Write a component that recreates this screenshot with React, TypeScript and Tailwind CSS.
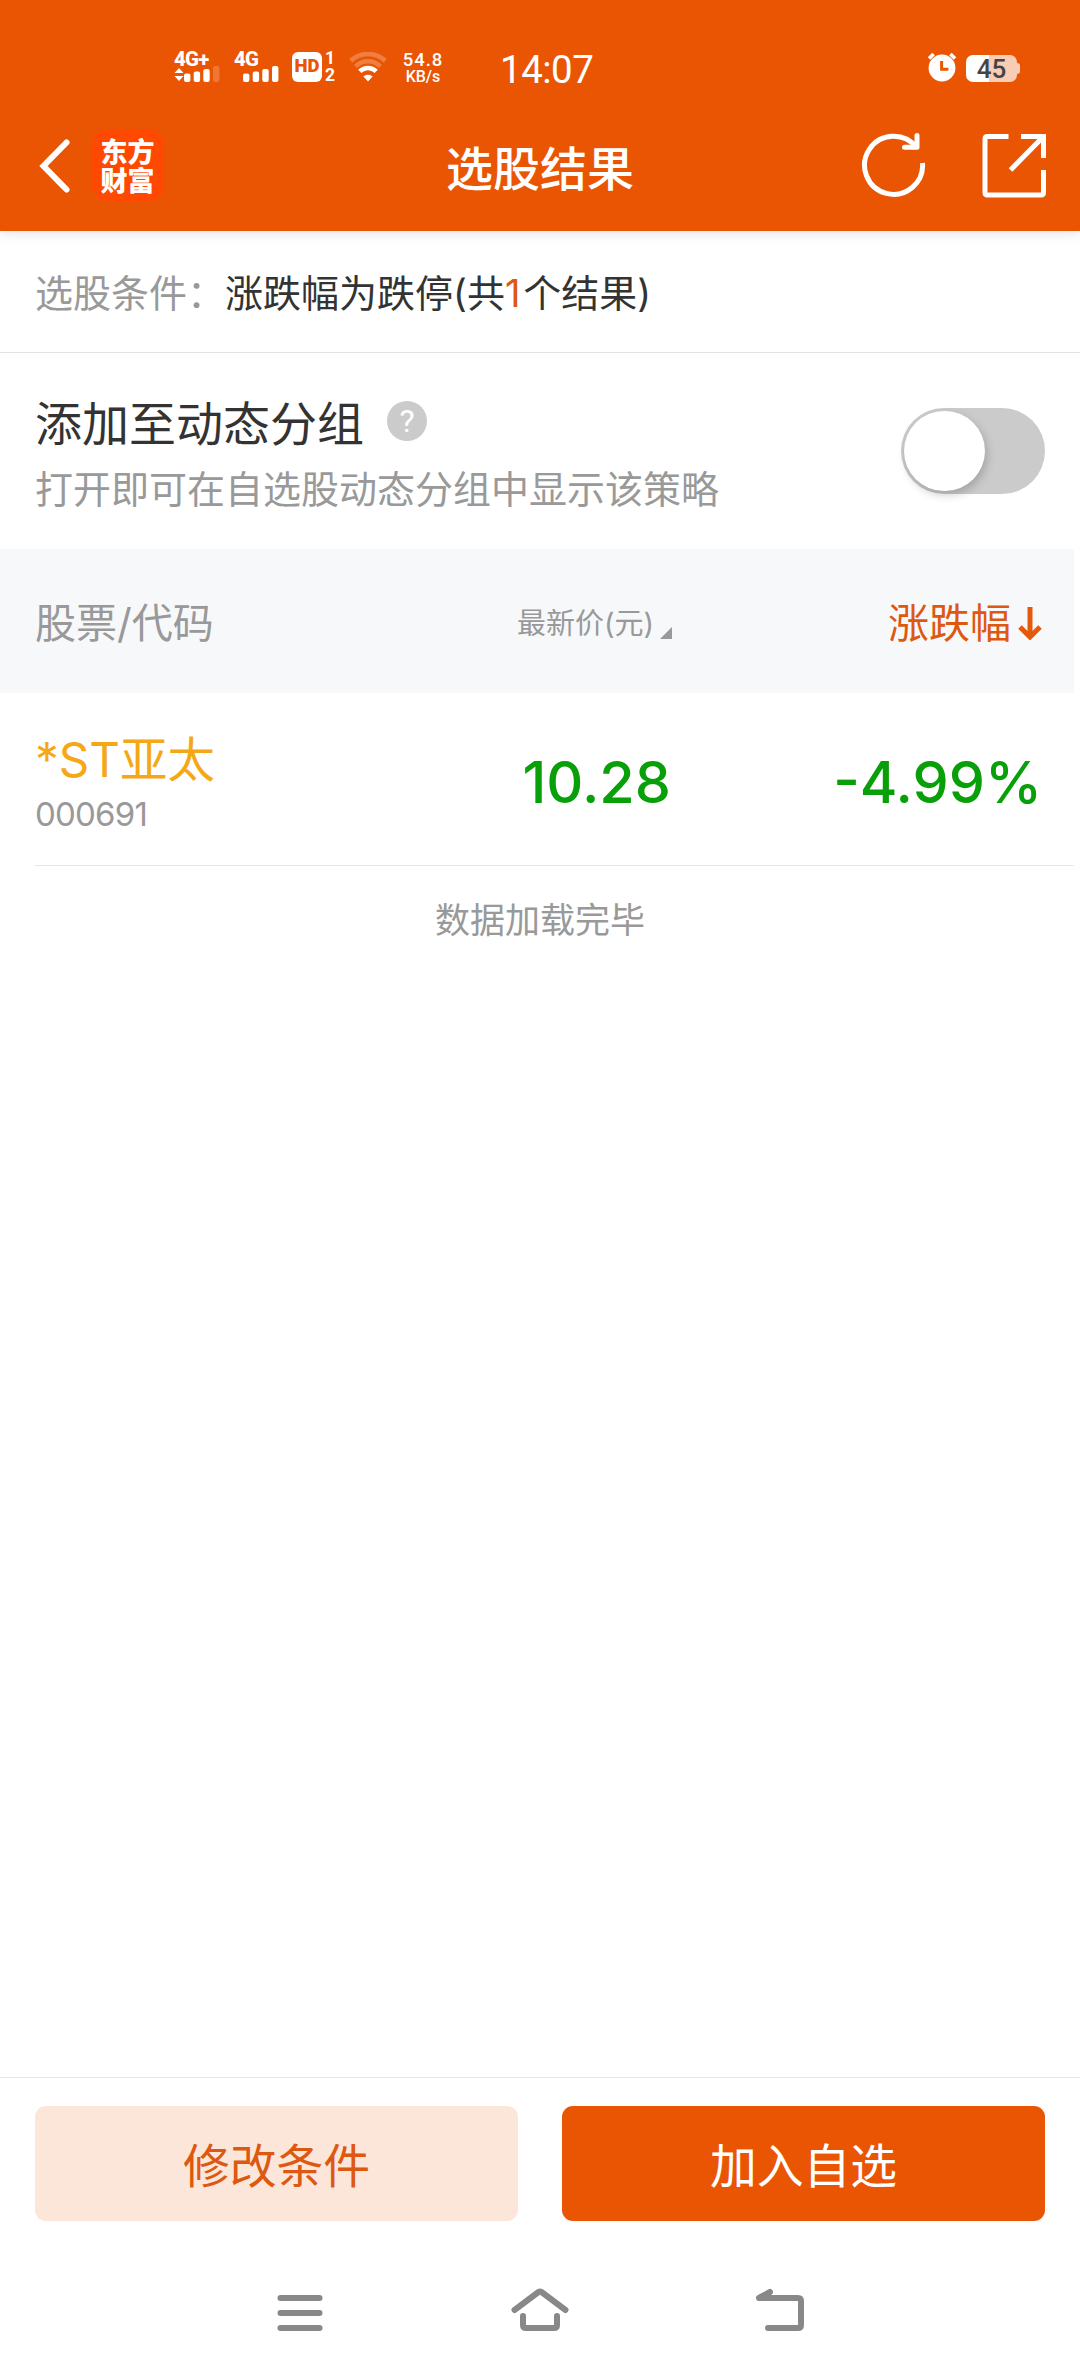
import type { ReactNode } from 'react'

type Stock = {
  name: string
  code: string
  price: string
  change: string
}

const stocks: Stock[] = [{ name: '*ST亚太', code: '000691', price: '10.28', change: '-4.99%' }]

function SignalBars({ dimLast = false }: { dimLast?: boolean }) {
  return (
    <svg width="36" height="16" viewBox="0 0 36 16" fill="#fff" className="block">
      <rect x="0" y="7.5" width="6.4" height="8.5" rx="2" />
      <rect x="9.7" y="5.5" width="6.4" height="10.5" rx="2" />
      <rect x="19.3" y="3" width="6.4" height="13" rx="2" />
      <rect x="29" y="0" width="6.4" height="16" rx="2" opacity={dimLast ? 0.2 : 1} />
    </svg>
  )
}

function WifiIcon() {
  return (
    <svg width="38" height="30" viewBox="0 0 38 30" fill="none" stroke="#fff" className="block">
      <g strokeWidth="4.6" opacity="0.24">
        <path d="M1.8 8.8C11.6 -0.4 26.4 -0.4 36.2 8.8" />
        <path d="M6.6 14.4C13.6 7.6 24.4 7.6 31.4 14.4" />
      </g>
      <path d="M10.8 19.4C15.6 14.8 22.4 14.8 27.2 19.4" strokeWidth="4.6" />
      <path d="M14.4 24.6C17 22 21 22 23.6 24.6L19 29.4Z" fill="#fff" stroke="none" />
    </svg>
  )
}

function AlarmIcon() {
  return (
    <svg width="30" height="30" viewBox="0 0 30 30" className="block">
      <circle cx="15" cy="16" r="13.4" fill="#fff" />
      <path d="M2 6.6L6.6 2M28 6.6L23.4 2" stroke="#fff" strokeWidth="3.6" />
      <path d="M14.6 9V17.2H21.4" fill="none" stroke="#ea5504" strokeWidth="3" />
    </svg>
  )
}

function StatusBar() {
  return (
    <div className="flex h-[96px] items-end font-[Roboto,sans-serif] text-white">
      <div className="ml-[174px] flex h-[48px] w-[46px] flex-col">
        <span className="h-[18px] text-[20.5px] leading-[23px] font-extrabold tracking-[-0.8px]">4G+</span>
        <div className="flex items-end">
          <svg width="10" height="15" viewBox="0 0 10 15" fill="#fff" className="block">
            <path d="M0.5 6L5 1L9.5 6ZM0.5 9L5 14L9.5 9Z" />
          </svg>
          <SignalBars dimLast />
        </div>
      </div>
      <div className="ml-[14px] flex h-[48px] w-[46px] flex-col">
        <span className="h-[18px] text-[20.5px] leading-[23px] font-extrabold tracking-[-0.8px]">4G</span>
        <div className="ml-[9px]">
          <SignalBars />
        </div>
      </div>
      <div className="mb-[14px] ml-[12px] flex h-[30px] w-[30px] items-center justify-center rounded-[6px] bg-white text-[18.5px] font-black text-[#ea5504]">
        HD
      </div>
      <div className="mb-[13px] ml-[2px] flex h-[33px] w-[12px] flex-col items-center text-[17.5px] leading-[16.5px] font-bold">
        <span>1</span>
        <span>2</span>
      </div>
      <div className="mb-[14px] ml-[13px]">
        <WifiIcon />
      </div>
      <div className="mb-[11px] ml-[9px] flex w-[54px] flex-col items-center font-medium">
        <span className="text-[18.5px] leading-[18px] tracking-[0.9px]">54.8</span>
        <span className="text-[16px] leading-[16px]">KB/s</span>
      </div>
      <div className="mb-[6px] ml-[50px] text-[38.5px] leading-[40px] tracking-[-0.5px]">14:07</div>
      <div className="mb-[14px] ml-auto">
        <AlarmIcon />
      </div>
      <div className="mr-[60px] mb-[14px] ml-[9px] flex items-center">
        <div className="flex h-[27px] w-[51px] items-center justify-center rounded-[7px] bg-[linear-gradient(to_right,#fff_45%,#f9ccb4_45%)] pt-[2px] text-[26px] font-medium text-[#444]">
          45
        </div>
        <div className="h-[11px] w-[3px] rounded-r-[3px] bg-[#f9ccb4]" />
      </div>
    </div>
  )
}

function NavHeader() {
  return (
    <div className="flex h-[135px] items-start text-white">
      <div className="flex w-[360px] items-start">
        <svg width="32" height="56" viewBox="0 0 32 56" className="mt-[42px] ml-[39px] block">
          <path d="M27.5 4.5L4.5 28L27.5 51.5" fill="none" stroke="#fff" strokeWidth="6" strokeLinecap="round" />
        </svg>
        <div className="mt-[33px] ml-[21px] flex h-[72px] w-[72px] items-center justify-center rounded-[15px] bg-[#ff4800]">
          <p className="w-[55px] font-['Noto_Sans_CJK_SC',sans-serif] text-[27px] leading-[29.5px] font-black break-all">东方财富</p>
        </div>
      </div>
      <h1 className="mt-[44px] flex-1 text-center text-[47px] leading-[58px] font-medium">选股结果</h1>
      <div className="flex w-[360px] justify-end pt-[36px] pr-[32px]">
        <svg width="68" height="68" viewBox="0 0 68 68" fill="none" stroke="#fff" strokeWidth="5" className="block">
          <path d="M62.5 31A29 29 0 1 1 56.5 15.5" />
          <path d="M57 3.5V15.3H44.5" strokeLinecap="round" strokeLinejoin="round" />
        </svg>
        <svg width="68" height="68" viewBox="0 0 68 68" fill="none" stroke="#fff" strokeWidth="5" className="ml-[52px] block">
          <path d="M28.5 4.5H7.5Q5 4.5 5 7V60.5Q5 63 7.5 63H61Q63.5 63 63.5 60.5V38" />
          <path d="M41 4.5H63.5V26M62.5 5.5L30.5 38" />
        </svg>
      </div>
    </div>
  )
}

function Toggle() {
  return (
    <div className="h-[86px] w-[144px] rounded-full bg-[#cbcbcb] p-[3px]">
      <div className="h-[80px] w-[81px] rounded-full bg-white shadow-[2px_4px_10px_rgba(0,0,0,0.2)]" />
    </div>
  )
}

function StockRow({ stock }: { stock: Stock }) {
  return (
    <div className="ml-[35px] flex h-[173px] w-[1039px] items-center border-b border-[#e8e8e8]">
      <div className="flex w-[400px] flex-col pt-[11px]">
        <span className="text-[47.5px] leading-[58px] text-[#f5a816]">{stock.name}</span>
        <span className="text-[33px] leading-[50px] tracking-[-0.8px] text-[#999]">{stock.code}</span>
      </div>
      <span className="w-[236px] pt-[5px] text-right text-[57.5px] leading-[70px] font-medium text-[#089f08]">{stock.price}</span>
      <span className="flex-1 pt-[5px] pr-[32px] text-right text-[57.5px] leading-[70px] font-medium text-[#089f08]">
        {stock.change}
      </span>
    </div>
  )
}

function ActionButton({ children, primary = false }: { children: ReactNode; primary?: boolean }) {
  return (
    <button
      className={`flex h-[115px] w-[483px] items-center justify-center rounded-[11px] pt-[6px] text-[46.8px] ${
        primary ? 'bg-[#ea5504] text-white' : 'bg-[#fce6da] text-[#dd5810]'
      }`}
    >
      {children}
    </button>
  )
}

export default function App() {
  return (
    <div className="flex h-[2376px] w-[1080px] flex-col bg-white font-[Inter,'Noto_Sans_CJK_SC',sans-serif] text-[#333]">
      <header className="z-10 h-[231px] shrink-0 bg-[#ea5504] shadow-[0_2px_12px_rgba(0,0,0,0.12)]">
        <StatusBar />
        <NavHeader />
      </header>

      {/* 选股条件 */}
      <div className="flex h-[122px] items-center border-b border-[#e2e2e2] pt-[4px] pl-[35px] text-[38px]">
        <span className="text-[#999]">选股条件：</span>
        <span>
          涨跌幅为跌停(共<span className="pr-[3px] text-[#dd5810]">1</span>个结果)
        </span>
      </div>

      {/* 动态分组 */}
      <div className="flex h-[196px] items-center justify-between pr-[35px] pl-[35px]">
        <div className="flex flex-col pt-[6px]">
          <div className="flex h-[70px] items-center pt-[2px]">
            <span className="text-[47px]">添加至动态分组</span>
            <span className="mb-[6px] ml-[23px] flex h-[40px] w-[40px] items-center justify-center rounded-full bg-[#cbcbcb] font-[Roboto,sans-serif] text-[32px] text-white">
              ?
            </span>
          </div>
          <p className="h-[62px] text-[38px] leading-[62px] text-[#999]">打开即可在自选股动态分组中显示该策略</p>
        </div>
        <Toggle />
      </div>

      {/* 表头 */}
      <div className="flex h-[144px] w-[1074px] items-center bg-[#f7f8fa] pt-[6px] pl-[35px] text-[#999]">
        <span className="w-[482px] text-[41px]">股票/代码</span>
        <span className="text-[29px]">最新价(元)</span>
        <svg width="12" height="12" viewBox="0 0 12 12" className="mt-[17px] ml-[6px] block">
          <path d="M12 0V12H0Z" fill="#999" />
        </svg>
        <span className="ml-auto text-[41px] text-[#dd5810]">涨跌幅</span>
        <svg width="26" height="34" viewBox="0 0 26 34" className="mr-[31px] mb-[3px] ml-[6px] block">
          <path d="M13 1V30M3 21L13 31L23 21" fill="none" stroke="#e5590c" strokeWidth="5" />
        </svg>
      </div>

      {stocks.map(s => (
        <StockRow key={s.code} stock={s} />
      ))}
      <p className="mt-[29px] text-center text-[35px] leading-[50px] text-[#999]">数据加载完毕</p>

      <footer className="mt-auto h-[299px] shrink-0 border-t border-[#e8e8e8]">
        <div className="flex justify-between px-[35px] pt-[28px]">
          <ActionButton>修改条件</ActionButton>
          <ActionButton primary>加入自选</ActionButton>
        </div>

        {/* 系统导航栏 */}
        <nav className="mt-[64px] flex justify-center gap-[180px]">
          <svg width="60" height="50" viewBox="0 0 60 50" fill="none" stroke="#888" strokeWidth="6" strokeLinecap="round" className="block">
            <path d="M10.5 13H49.5M10.5 28H49.5M10.5 43H49.5" />
          </svg>
          <svg
            width="60"
            height="50"
            viewBox="0 0 60 50"
            fill="none"
            stroke="#888"
            strokeWidth="6"
            strokeLinecap="round"
            strokeLinejoin="round"
            className="block"
          >
            <path d="M4.5 25L28.5 7Q30 6 31.5 7L55.5 25" />
            <path d="M13 31V40Q13 43 16 43H44Q47 43 47 40V31" />
          </svg>
          <svg
            width="60"
            height="50"
            viewBox="0 0 60 50"
            fill="none"
            stroke="#888"
            strokeWidth="6"
            strokeLinecap="round"
            strokeLinejoin="round"
            className="block"
          >
            <path d="M20 7L9 13H48Q51 13 51 16V40Q51 43 48 43H18" />
          </svg>
        </nav>
      </footer>
    </div>
  )
}
